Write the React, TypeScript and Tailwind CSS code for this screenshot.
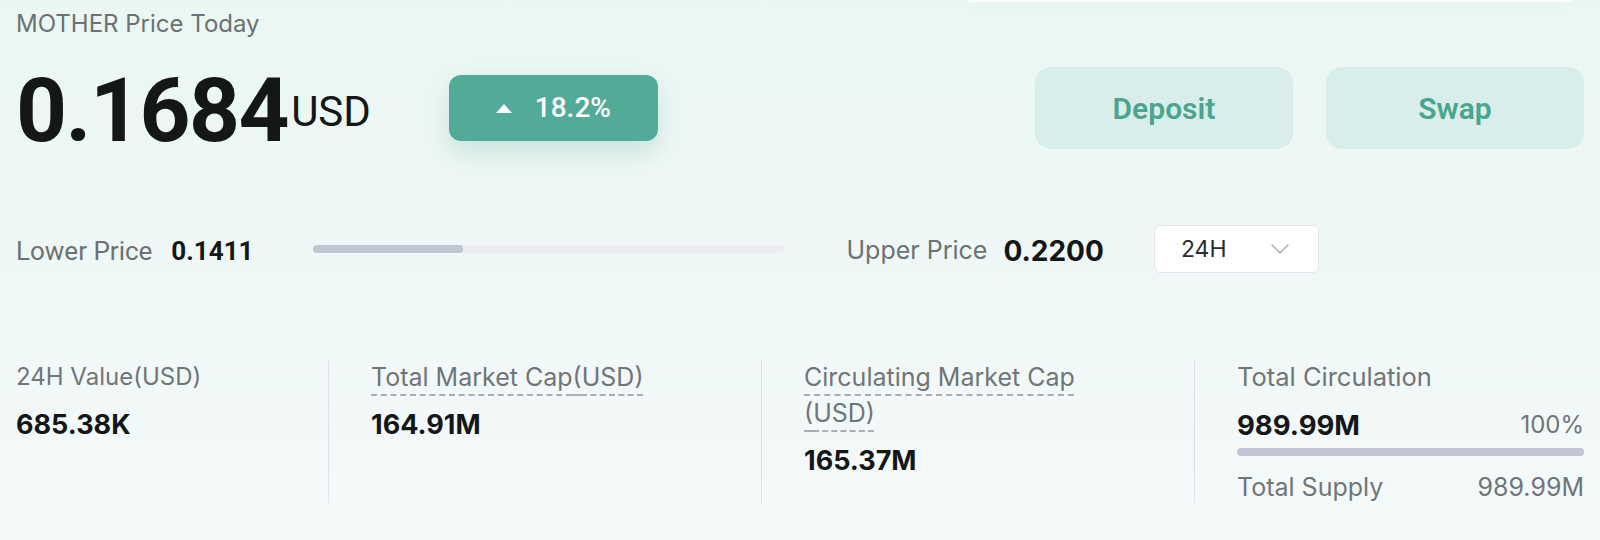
import { ChevronDown } from "lucide-react";

const stats = [
  { label: "24H Value(USD)", value: "685.38K", dashed: false },
  { label: "Total Market Cap(USD)", value: "164.91M", dashed: true },
  { label: "Circulating Market Cap(USD)", value: "165.37M", dashed: true },
];

function StatLabel({ text, dashed }: { text: string; dashed: boolean }) {
  if (!dashed) return <p className="text-[24px] leading-[36px] text-[#707577]">{text}</p>;
  const [head, tail] = text.split("(");
  return (
    <p className="max-w-[320px] text-[25px] leading-[36px] text-[#707577]">
      <span className="underline decoration-[#a9aeb1] decoration-dashed decoration-[1.5px] underline-offset-[8px]">
        {head}
        <wbr />({tail}
      </span>
    </p>
  );
}

export default function App() {
  return (
    <div className="relative min-h-[540px] w-full overflow-hidden bg-gradient-to-b from-[#eaf7f3] to-[#f5f9fa] font-['Inter',sans-serif]">
      {/* bottom edge of the card above */}
      <div className="absolute left-[968px] top-0 h-[2px] w-[603px] rounded-b-sm bg-white shadow-[0_2px_10px_rgba(0,0,0,0.05)]" />

      <div className="px-4">
        <p className="pt-[9px] text-[24px] leading-[30px] text-[#6c7273]">MOTHER Price Today</p>

        {/* price row */}
        <div className="mt-[28px] flex h-[82px] items-start">
          <div className="-mt-[1px] flex items-start font-['Roboto',sans-serif] text-[#141617]">
            <span className="text-[89px] font-bold leading-[90px] tracking-[-1.5px]">0.1684</span>
            <span className="ml-[3px] mt-[25px] text-[42px] leading-none">USD</span>
          </div>
          <div className="ml-[78px] mt-[8px] flex h-[66px] w-[209px] items-center justify-center gap-[23px] rounded-[12px] bg-[#52ab98] text-white shadow-[0_12px_26px_rgba(60,150,130,0.2)]">
            <span className="h-0 w-0 border-x-[8px] border-b-[9px] border-x-transparent border-b-white" />
            <span className="font-['Roboto',sans-serif] text-[28px] font-medium">18.2%</span>
          </div>
          <div className="ml-auto flex gap-[33px]">
            {["Deposit", "Swap"].map((b) => (
              <button
                key={b}
                className="flex h-[82px] w-[258px] items-center justify-center rounded-[16px] bg-[#d9eeea] font-['Roboto',sans-serif] text-[30px] font-semibold text-[#4aa58e]"
              >
                {b}
              </button>
            ))}
          </div>
        </div>

        {/* range row */}
        <div className="mt-[76px] flex h-[48px] items-center whitespace-nowrap">
          <span className="pt-[4px] font-['Roboto',sans-serif] text-[26px] text-[#6c7273]">Lower Price</span>
          <span className="ml-[19px] pt-[4px] font-['Roboto',sans-serif] text-[26px] font-bold text-[#141617]">0.1411</span>
          <div className="ml-[59px] h-[8px] w-[471px] shrink-0 rounded-full bg-[#eceef3]">
            <div className="h-full w-[32%] rounded-full bg-[#c1c6d5]" />
          </div>
          <span className="ml-[63px] pt-[4px] text-[25px] text-[#6c7273]">Upper Price</span>
          <span className="ml-[16px] pt-[4px] text-[28px] font-bold text-[#141617]">0.2200</span>
          <div className="ml-[50px] flex h-[48px] w-[165px] shrink-0 items-center justify-between rounded-[6px] border border-[#e3e6e8] bg-white pl-[26px] pr-[22px]">
            <span className="text-[23px] text-[#2a2d2f]">24H</span>
            <ChevronDown className="h-[32px] w-[32px] text-[#a3a8ac]" strokeWidth={1} />
          </div>
        </div>

        {/* stats */}
        <div className="mt-[86px] grid grid-cols-[312px_433px_433px_1fr]">
          {stats.map((s, i) => (
            <div
              key={s.label}
              className={i === 0 ? "h-[144px]" : "h-[144px] border-l border-[#dfe3e5] pl-[42px]"}
            >
              <StatLabel text={s.label} dashed={s.dashed} />
              <p className="mt-[12px] text-[27px] font-bold leading-[36px] text-[#141617]">{s.value}</p>
            </div>
          ))}
          <div className="h-[144px] border-l border-[#dfe3e5] pl-[42px]">
            <p className="text-[25.5px] leading-[36px] text-[#707577]">Total Circulation</p>
            <div className="mt-[12px] flex items-center justify-between leading-[36px]">
              <span className="text-[27.5px] font-bold text-[#141617]">989.99M</span>
              <span className="text-[24px] text-[#707577]">100%</span>
            </div>
            <div className="mt-[5px] h-[8px] rounded-full bg-[#c3c5d6]" />
            <div className="mt-[13px] flex items-center justify-between text-[25px] leading-[36px] text-[#707577]">
              <span>Total Supply</span>
              <span>989.99M</span>
            </div>
          </div>
        </div>
      </div>
    </div>
  );
}
